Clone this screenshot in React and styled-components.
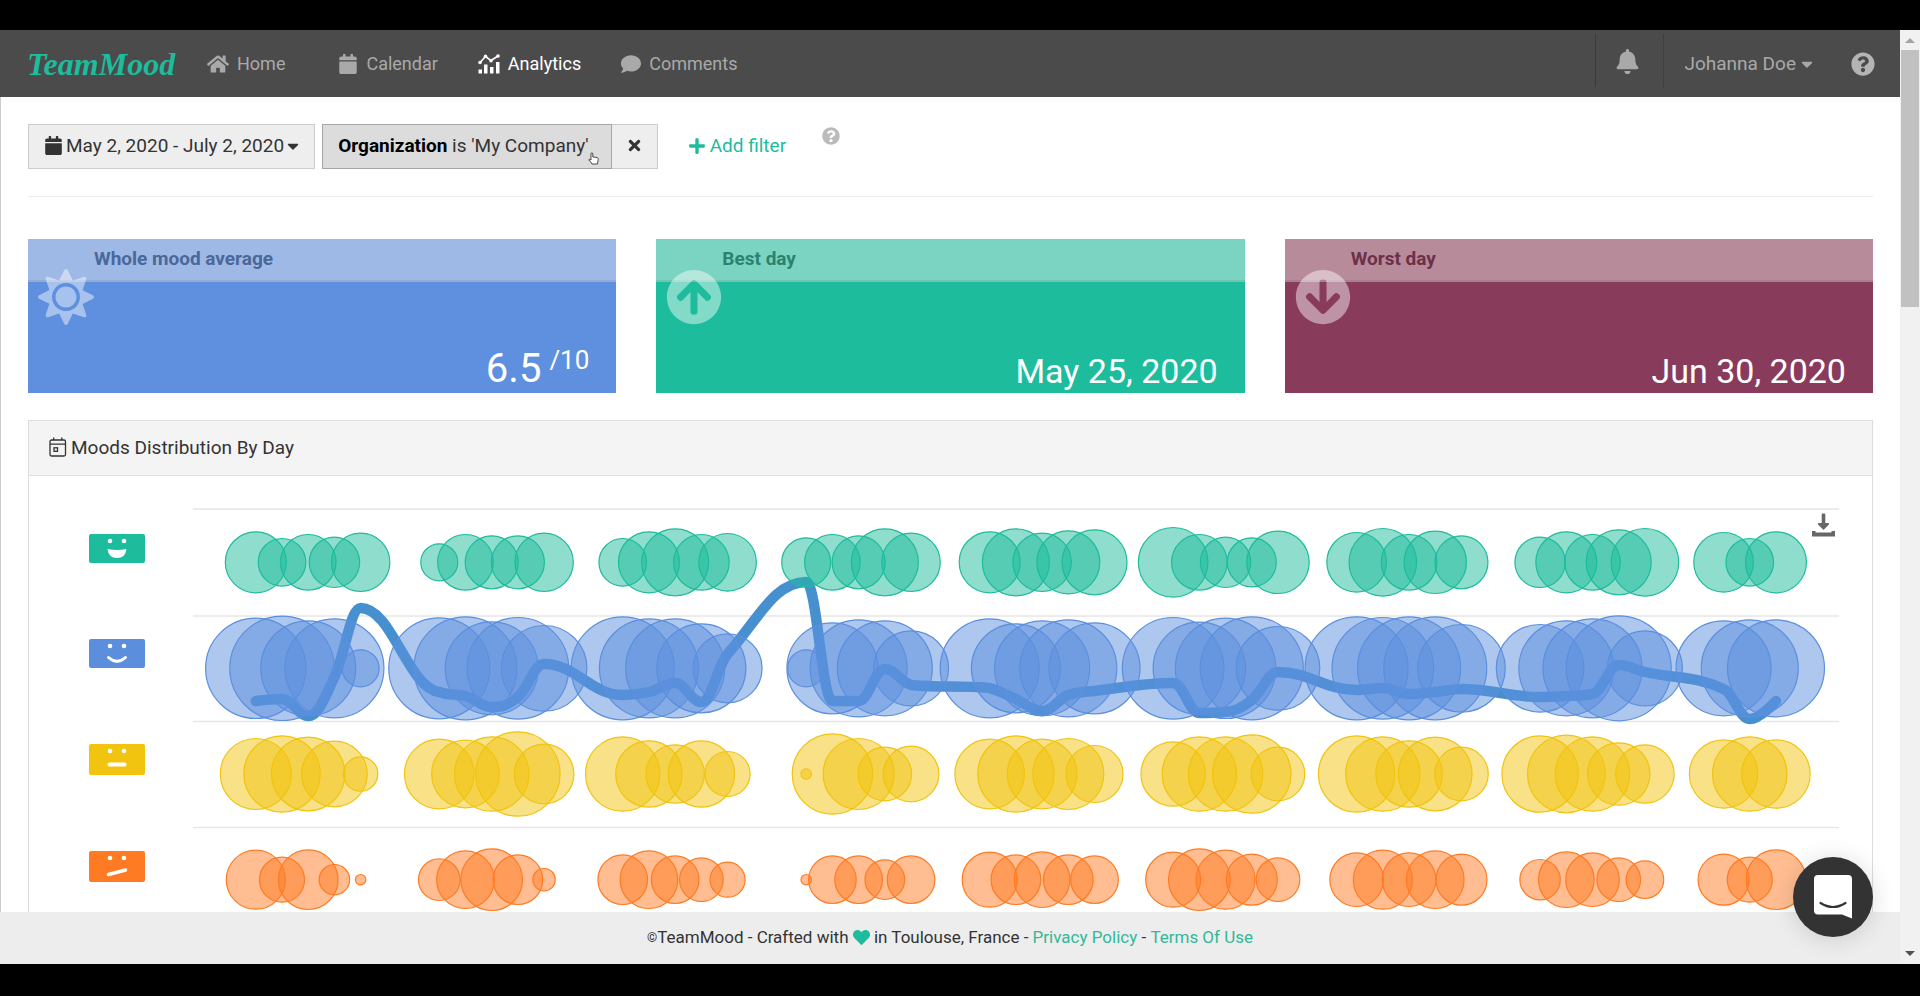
import React from "react";
import styled, { createGlobalStyle } from "styled-components";
import {
  FaHome,
  FaCalendar,
  FaComment,
  FaBell,
  FaQuestionCircle,
  FaCaretDown,
  FaTimes,
  FaPlus,
  FaHeart,
  FaSun,
  FaArrowCircleUp,
  FaArrowCircleDown,
} from "react-icons/fa";

const GlobalStyle = createGlobalStyle`
  *, *::before, *::after { box-sizing: border-box; }
  body { margin: 0; background: #000; }
  body, button { font-family: Roboto, "Liberation Sans", sans-serif; font-size: 19px; }
  svg { display: block; flex: none; }
  a { text-decoration: none; }
  button { cursor: pointer; }
`;

const Screen = styled.div`
  display: flex;
  height: 100vh;
  padding: 30px 0 32px;
  background: #000;
`;

const Page = styled.div`
  position: relative;
  display: flex;
  flex-direction: column;
  flex: 1;
  min-width: 0;
  background: #fff;
  color: #333;
`;

const Caret = styled(FaCaretDown)`
  width: 12px;
  height: 18px;
`;

/* ---------- top bar ---------- */

const TopBar = styled.header`
  display: flex;
  align-items: center;
  flex: none;
  height: 67px;
  padding: 0 25px 0 27px;
  background: #4b4b4b;
`;

const Logo = styled.a`
  width: 180px;
  color: #1dbc9c;
  font: italic bold 32px/40px "Liberation Serif", serif;
`;

const Nav = styled.nav`
  display: flex;
  gap: 40px;
  flex: 1;
`;

const NavLink = styled.a`
  display: flex;
  align-items: center;
  gap: 8px;
  color: ${(p) => (p.$active ? "#fff" : "#a9a9a9")};
  font-size: 18px;
  line-height: 24px;

  &:first-child { margin-right: 13px; }
`;

const BellButton = styled.button`
  display: flex;
  align-items: center;
  justify-content: center;
  align-self: flex-start;
  width: 69px;
  height: 53px;
  margin-top: 4px;
  padding: 2px 4px 0 0;
  border: 0;
  border-left: 1px solid #3a3a3a;
  border-right: 1px solid #3f3f3f;
  background: none;
  color: #a9a9a9;
`;

const UserMenu = styled.button`
  display: flex;
  align-items: center;
  gap: 5px;
  margin: 0 38px 0 20px;
  padding: 0;
  border: 0;
  background: none;
  color: #a9a9a9;
`;

const HelpLink = styled.a`
  color: ${(p) => p.$color};
`;

/* ---------- content ---------- */

const Content = styled.main`
  flex: 1;
  min-height: 0;
  overflow: hidden;
  padding: 27px 27px 0;
  border-left: 1px solid #ccc;
`;

const Filters = styled.div`
  display: flex;
  align-items: center;
  height: 73px;
  padding-bottom: 27px;
  border-bottom: 1px solid #ececec;
`;

const FilterButton = styled.button`
  position: relative;
  display: flex;
  align-items: center;
  gap: 3px;
  height: 45px;
  padding: 0 15px 2px;
  border: 1px solid ${(p) => (p.$pressed ? "#a6a6a6" : "#ccc")};
  background: ${(p) => (p.$pressed ? "#dcdcdc" : "#eee")};
  color: #333;
  white-space: pre;

  b { color: #000; }
`;

const FilterGroup = styled.div`
  display: flex;
  margin: 0 30px 0 7px;

  ${FilterButton}:first-child { padding-right: 22px; }
  ${FilterButton}:last-child { border-left: 0; padding: 0 14px 2px; }
`;

const Pointer = styled.svg`
  position: absolute;
  right: 12px;
  bottom: 3px;
`;

const AddFilter = styled.button`
  display: flex;
  align-items: center;
  gap: 4px;
  margin-right: 36px;
  padding: 0 0 2px;
  border: 0;
  background: none;
  color: #1dbc9c;
`;

const HintSlot = styled.div`
  align-self: flex-start;
  padding-top: 3px;
`;

const Cards = styled.div`
  display: grid;
  grid-template-columns: repeat(3, 1fr);
  gap: 40px;
  margin: 42px 0 27px;
`;

const Card = styled.section`
  position: relative;
  display: flex;
  flex-direction: column;
  justify-content: space-between;
  height: 154px;
  background: ${(p) => p.$color};
  color: #fff;
`;

const CardTitle = styled.h2`
  height: 43px;
  margin: 0;
  padding: 0 66px;
  border-bottom: 2px solid rgba(0, 0, 0, 0.08);
  background: ${(p) => p.$tint};
  color: ${(p) => p.$ink};
  font-size: 19px;
  font-weight: 700;
  line-height: 39px;
`;

const CardIcon = styled.div`
  position: absolute;
  top: 30px;
  left: 10px;
  color: rgba(255, 255, 255, 0.45);
`;

const CardValue = styled.div`
  display: flex;
  justify-content: flex-end;
  align-items: flex-start;
  gap: 8px;
  padding-right: 27px;
  font-size: ${(p) => (p.$large ? 40 : 34)}px;
  line-height: ${(p) => (p.$large ? 48 : 44)}px;
`;

const Scale = styled.span`
  font-size: 26px;
  line-height: 30px;
`;

const Panel = styled.section`
  border: 1px solid #ddd;
`;

const PanelHeader = styled.h2`
  display: flex;
  align-items: center;
  gap: 4px;
  height: 55px;
  margin: 0;
  padding: 0 20px 2px;
  border-bottom: 1px solid #ddd;
  background: #f4f4f4;
  font-size: 19px;
  font-weight: 400;
`;

const PanelBody = styled.div`
  position: relative;
  display: flex;
  gap: 48px;
  padding: 24px 33px 0 60px;
`;

const Faces = styled.div`
  display: flex;
  flex-direction: column;
  gap: 76px;
  padding-top: 34px;
`;

const Plot = styled.svg`
  flex: 1 1 0;
  min-width: 0;
  height: auto;
`;

const DownloadButton = styled.button`
  position: absolute;
  top: 37px;
  right: 37px;
  padding: 0;
  border: 0;
  background: none;
  color: #666;
`;

/* ---------- footer, chat, scroll bar ---------- */

const Footer = styled.footer`
  display: flex;
  align-items: center;
  justify-content: center;
  flex: none;
  height: 52px;
  padding-bottom: 2px;
  background: #ededed;
  font-size: 17px;
  white-space: pre;

  a { color: #33b899; }
  small { font-size: 13px; }
`;

const ChatButton = styled.button`
  position: absolute;
  right: 27px;
  bottom: 27px;
  display: flex;
  align-items: center;
  justify-content: center;
  width: 80px;
  height: 80px;
  padding: 0;
  border: 0;
  border-radius: 50%;
  background: #333;
  box-shadow: 0 2px 24px rgba(0, 0, 0, 0.14);
`;

const ScrollTrack = styled.div`
  display: flex;
  flex-direction: column;
  align-items: center;
  width: 20px;
  flex: none;
  background: #f1f1f1;
`;

const ScrollArrow = styled.svg`
  margin-top: ${(p) => (p.$end ? "auto" : "0")};
`;

const ScrollThumb = styled.div`
  width: 18px;
  height: 27.5%;
  background: #c1c1c1;
`;

/* ---------- chart data ---------- */

const DAY = 26.21;
const FIRST_DAY = 62.8;

const MOODS = [
  {
    name: "Great",
    color: "#1dbc9c",
    cy: 62.3,
    faceHeight: 29,
    mouth: <path d="M18.500 15q9.500 2 19 0q-1 9-9.500 9t-9.500-9z" fill="#fff" />,
    weeks: [
      [31, 24.3, 28.3, 25.7, 29.7], [19, 28.3, 27, 27, 29.7], [24.3, 31, 34, 28.3, 29.3],
      [25, 28.3, 27, 34, 29.7], [31, 34, 29.7, 32, 33], [35.3, 28.3, 25.7, 25, 31.7],
      [30.3, 34.3, 28.3, 31.7, 27], [25.7, 31, 28.3, 33, 34.3], [30.3, 24.3, 31],
    ],
  },
  {
    name: "Good",
    color: "#5b8fde",
    cy: 168.3,
    faceHeight: 29,
    mouth: <path d="M19.500 18.500q8.500 7.500 17 0" fill="none" stroke="#fff" strokeWidth="3" strokeLinecap="round" />,
    weeks: [
      [50.7, 52.7, 48, 50, 19], [51, 52, 47, 51.3, 43.3], [52, 50, 50, 45, 35],
      [19, 46, 49, 48, 38], [50, 45, 48, 49, 46], [51.3, 46.7, 50.7, 52, 42.3],
      [52, 51.3, 52, 52, 44.3], [44.3, 48, 50, 53, 38], [48, 49, 49],
    ],
  },
  {
    name: "Average",
    color: "#f1c40f",
    cy: 274,
    faceHeight: 31,
    mouth: <path d="M20.500 20.500h15" fill="none" stroke="#fff" strokeWidth="4" strokeLinecap="round" />,
    weeks: [
      [36, 38.7, 37.3, 33.3, 17.7], [35.3, 34.3, 37.7, 42.7, 30.3], [37.7, 33.7, 29.7, 33.7, 23],
      [5.7, 40.7, 36, 27.3, 28.3], [35.3, 38.7, 35.3, 36, 29], [32.7, 37.7, 37.7, 39.7, 27.3],
      [38.7, 37.7, 33.7, 37.3, 27.3], [38.7, 39.3, 37.7, 31.7, 29.7], [34.7, 37.7, 34.7],
    ],
  },
  {
    name: "Hard",
    color: "#ff7b23",
    cy: 379.7,
    faceHeight: 31,
    mouth: <path d="M19.500 23.500l17-4.500" fill="none" stroke="#fff" strokeWidth="3.500" strokeLinecap="round" />,
    weeks: [
      [30, 23, 30.3, 15.7, 5.7], [21.3, 29.3, 31.3, 25.3, 11.7], [25.3, 29.3, 24.3, 22.3, 18],
      [5.7, 24.3, 24.3, 20.3, 24.3], [28, 25.3, 28.3, 25.3, 24.3], [28, 31.3, 30, 26, 22.3],
      [27.3, 30, 27.3, 29.3, 26], [20.7, 28.3, 27.3, 22.3, 19.3], [26, 23, 30.3],
    ],
  },
];

const AVERAGE = [
  [201, 199, 216, 177, 108], [192, 196, 207, 197, 164], [195, 192, 183, 202, 154],
  [82, 201, 201, 169, 185], [188, 199, 211, 195, 191], [183, 213, 212, 200, 172],
  [190, 188, 194, 192, 189], [197, 196, 194, 165, 172], [189, 219, 201],
];

const dayX = (week, day) => FIRST_DAY + (week * 7 + day) * DAY;

/* Spline whose control points never overshoot the neighbouring values. */
function splinePath(points) {
  let path = `M${points[0].x} ${points[0].y}`;
  let out = points[0];
  for (let i = 1; i < points.length; i += 1) {
    const prev = points[i - 1];
    const cur = points[i];
    const next = points[i + 1];
    let left = cur;
    let right = cur;
    if (next) {
      const lx = (1.5 * cur.x + prev.x) / 2.5;
      const rx = (1.5 * cur.x + next.x) / 2.5;
      let ly = (1.5 * cur.y + prev.y) / 2.5;
      let ry = (1.5 * cur.y + next.y) / 2.5;
      const shift = ((ry - ly) * (rx - cur.x)) / (rx - lx) + cur.y - ry;
      ly += shift;
      ry += shift;
      if (ly > Math.max(prev.y, cur.y)) {
        ly = Math.max(prev.y, cur.y);
        ry = 2 * cur.y - ly;
      } else if (ly < Math.min(prev.y, cur.y)) {
        ly = Math.min(prev.y, cur.y);
        ry = 2 * cur.y - ly;
      }
      if (ry > Math.max(next.y, cur.y)) {
        ry = Math.max(next.y, cur.y);
        ly = 2 * cur.y - ry;
      } else if (ry < Math.min(next.y, cur.y)) {
        ry = Math.min(next.y, cur.y);
        ly = 2 * cur.y - ry;
      }
      left = { x: lx, y: ly };
      right = { x: rx, y: ry };
    }
    path += `C${out.x} ${out.y} ${left.x} ${left.y} ${cur.x} ${cur.y}`;
    out = right;
  }
  return path;
}

const averagePath = splinePath(
  AVERAGE.flatMap((days, w) => days.map((y, d) => ({ x: dayX(w, d), y })))
);

/* ---------- drawings ---------- */

const AnalyticsIcon = () => (
  <svg width="22" height="20" viewBox="0 0 22 20" fill="currentColor" aria-hidden="true">
    <path d="M0.500 15.500h3.500v4h-3.500zM6 10.500h3.500v9H6zM12 13h3.500v6.500H12zM18 8h3.500v11.500H18z" />
    <path d="M2 8.500L7.500 2.500L13 6.500L20 2" fill="none" stroke="currentColor" strokeWidth="1.600" />
    <circle cx="2" cy="8.500" r="1.800" />
    <circle cx="7.500" cy="2.300" r="1.800" />
    <circle cx="13" cy="6.800" r="1.800" />
    <circle cx="20" cy="2" r="1.800" />
  </svg>
);

const EventIcon = () => (
  <svg width="18" height="20" viewBox="0 0 18 20" fill="none" stroke="currentColor" strokeWidth="1.300" aria-hidden="true">
    <rect x="1" y="3" width="15.500" height="16" rx="1.500" />
    <path d="M1 7.200h15.500M4.700 0.500v2.500M12.800 0.500v2.500" />
    <rect x="5" y="10.800" width="3.500" height="3.500" />
  </svg>
);

const DownloadIcon = () => (
  <svg width="23" height="24" viewBox="0 0 23 24" fill="currentColor" aria-hidden="true">
    <path d="M9.700 1.500q0-1 1-1h1.600q1 0 1 1v8.500h3.200q1.200.8.200 1.800l-5.200 5.200l-5.200-5.200q-1-1 .2-1.800h3.200z" />
    <path d="M0 18h3.500v1.500h16V18H23v5.500H0z" />
  </svg>
);

const Face = ({ mood }) => (
  <svg width="56" height={mood.faceHeight} role="img" aria-label={mood.name}>
    <rect width="56" height={mood.faceHeight} rx="2" fill={mood.color} />
    <circle cx="21" cy="7" r="2.300" fill="#fff" />
    <circle cx="35" cy="7" r="2.300" fill="#fff" />
    {mood.mouth}
  </svg>
);

const MoodChart = () => (
  <Plot viewBox="0 0 1646 440" role="img" aria-label="Moods distribution by day">
    {[9, 116, 221.500, 327.500].map((y) => (
      <line key={y} x1="0" x2="1646" y1={y} y2={y} stroke="#e6e6e6" strokeWidth="1.500" />
    ))}
    <path d={averagePath} fill="none" stroke="#4790d0" strokeWidth="10.500" strokeLinecap="round" strokeLinejoin="round" />
    {MOODS.map((mood) => (
      <g key={mood.name} fill={mood.color} fillOpacity="0.5" stroke={mood.color} strokeWidth="1.200">
        {mood.weeks.map((days, w) =>
          days.map((r, d) => <circle key={`${w}-${d}`} cx={dayX(w, d)} cy={mood.cy} r={r - 0.5} />)
        )}
      </g>
    ))}
  </Plot>
);

const StatCard = ({ title, color, tint, ink, icon, large, children }) => (
  <Card $color={color}>
    <CardTitle $tint={tint} $ink={ink}>{title}</CardTitle>
    <CardIcon>{icon}</CardIcon>
    <CardValue $large={large}>{children}</CardValue>
  </Card>
);

export default function App() {
  return (
    <Screen>
      <GlobalStyle />
      <Page>
        <TopBar>
          <Logo href="#">TeamMood</Logo>
          <Nav>
            <NavLink href="#"><FaHome size={22} />Home</NavLink>
            <NavLink href="#"><FaCalendar size={20} />Calendar</NavLink>
            <NavLink href="#" $active><AnalyticsIcon />Analytics</NavLink>
            <NavLink href="#"><FaComment size={20} />Comments</NavLink>
          </Nav>
          <BellButton aria-label="Notifications"><FaBell size={25} /></BellButton>
          <UserMenu>Johanna Doe<Caret /></UserMenu>
          <HelpLink href="#" $color="#b4b4b4" aria-label="Help"><FaQuestionCircle size={24} /></HelpLink>
        </TopBar>

        <Content>
          <Filters>
            <FilterButton><FaCalendar size={19} />May 2, 2020 - July 2, 2020<Caret /></FilterButton>
            <FilterGroup>
              <FilterButton $pressed>
                <span><b>Organization</b> is 'My Company'</span>
                <Pointer width="11" height="13" viewBox="0 0 11 13" aria-hidden="true">
                  <path
                    d="M3 8V1.800q0-1 .9-1t.9 1V5q2.200 0 4.800.8q.8.400.6 1.700L9.500 12H4Q2.500 9.500.8 7.800q.8-1.200 2.200.2z"
                    fill="#fff"
                    stroke="#222"
                    strokeWidth="0.800"
                  />
                </Pointer>
              </FilterButton>
              <FilterButton aria-label="Remove filter"><FaTimes size={17} /></FilterButton>
            </FilterGroup>
            <AddFilter><FaPlus size={18} />Add filter</AddFilter>
            <HintSlot>
              <HelpLink href="#" $color="#bbb" aria-label="About filters"><FaQuestionCircle size={18} /></HelpLink>
            </HintSlot>
          </Filters>

          <Cards>
            <StatCard title="Whole mood average" color="#5e90df" tint="#9fb9e6" ink="#4a6899" icon={<FaSun size={56} />} large>
              6.5<Scale>/10</Scale>
            </StatCard>
            <StatCard title="Best day" color="#1dbc9c" tint="#7bd4c2" ink="#2a8370" icon={<FaArrowCircleUp size={56} />}>
              May 25, 2020
            </StatCard>
            <StatCard title="Worst day" color="#893b5b" tint="#b88b9b" ink="#6d3049" icon={<FaArrowCircleDown size={56} />}>
              Jun 30, 2020
            </StatCard>
          </Cards>

          <Panel>
            <PanelHeader><EventIcon />Moods Distribution By Day</PanelHeader>
            <PanelBody>
              <Faces>
                {MOODS.map((mood) => <Face key={mood.name} mood={mood} />)}
              </Faces>
              <MoodChart />
              <DownloadButton aria-label="Download chart"><DownloadIcon /></DownloadButton>
            </PanelBody>
          </Panel>
        </Content>

        <Footer>
          <small>©</small>TeamMood - Crafted with <FaHeart size={17} color="#1dbc9c" /> in Toulouse, France - <a href="#">Privacy Policy</a> - <a href="#">Terms Of Use</a>
        </Footer>

        <ChatButton aria-label="Open chat">
          <svg width="38" height="44" viewBox="0 0 38 44" aria-hidden="true">
            <path d="M4 0h30q4 0 4 4v39.500l-10-4H4q-4 0-4-4V4q0-4 4-4z" fill="#fff" />
            <path d="M6.500 28q12.500 8 25 0" fill="none" stroke="#333" strokeWidth="2.200" strokeLinecap="round" />
          </svg>
        </ChatButton>
      </Page>

      <ScrollTrack aria-hidden="true">
        <ScrollArrow width="20" height="20"><path d="M5 13h10l-5-5z" fill="#a3a3a3" /></ScrollArrow>
        <ScrollThumb />
        <ScrollArrow $end width="20" height="20"><path d="M5 7h10l-5 5z" fill="#505050" /></ScrollArrow>
      </ScrollTrack>
    </Screen>
  );
}
